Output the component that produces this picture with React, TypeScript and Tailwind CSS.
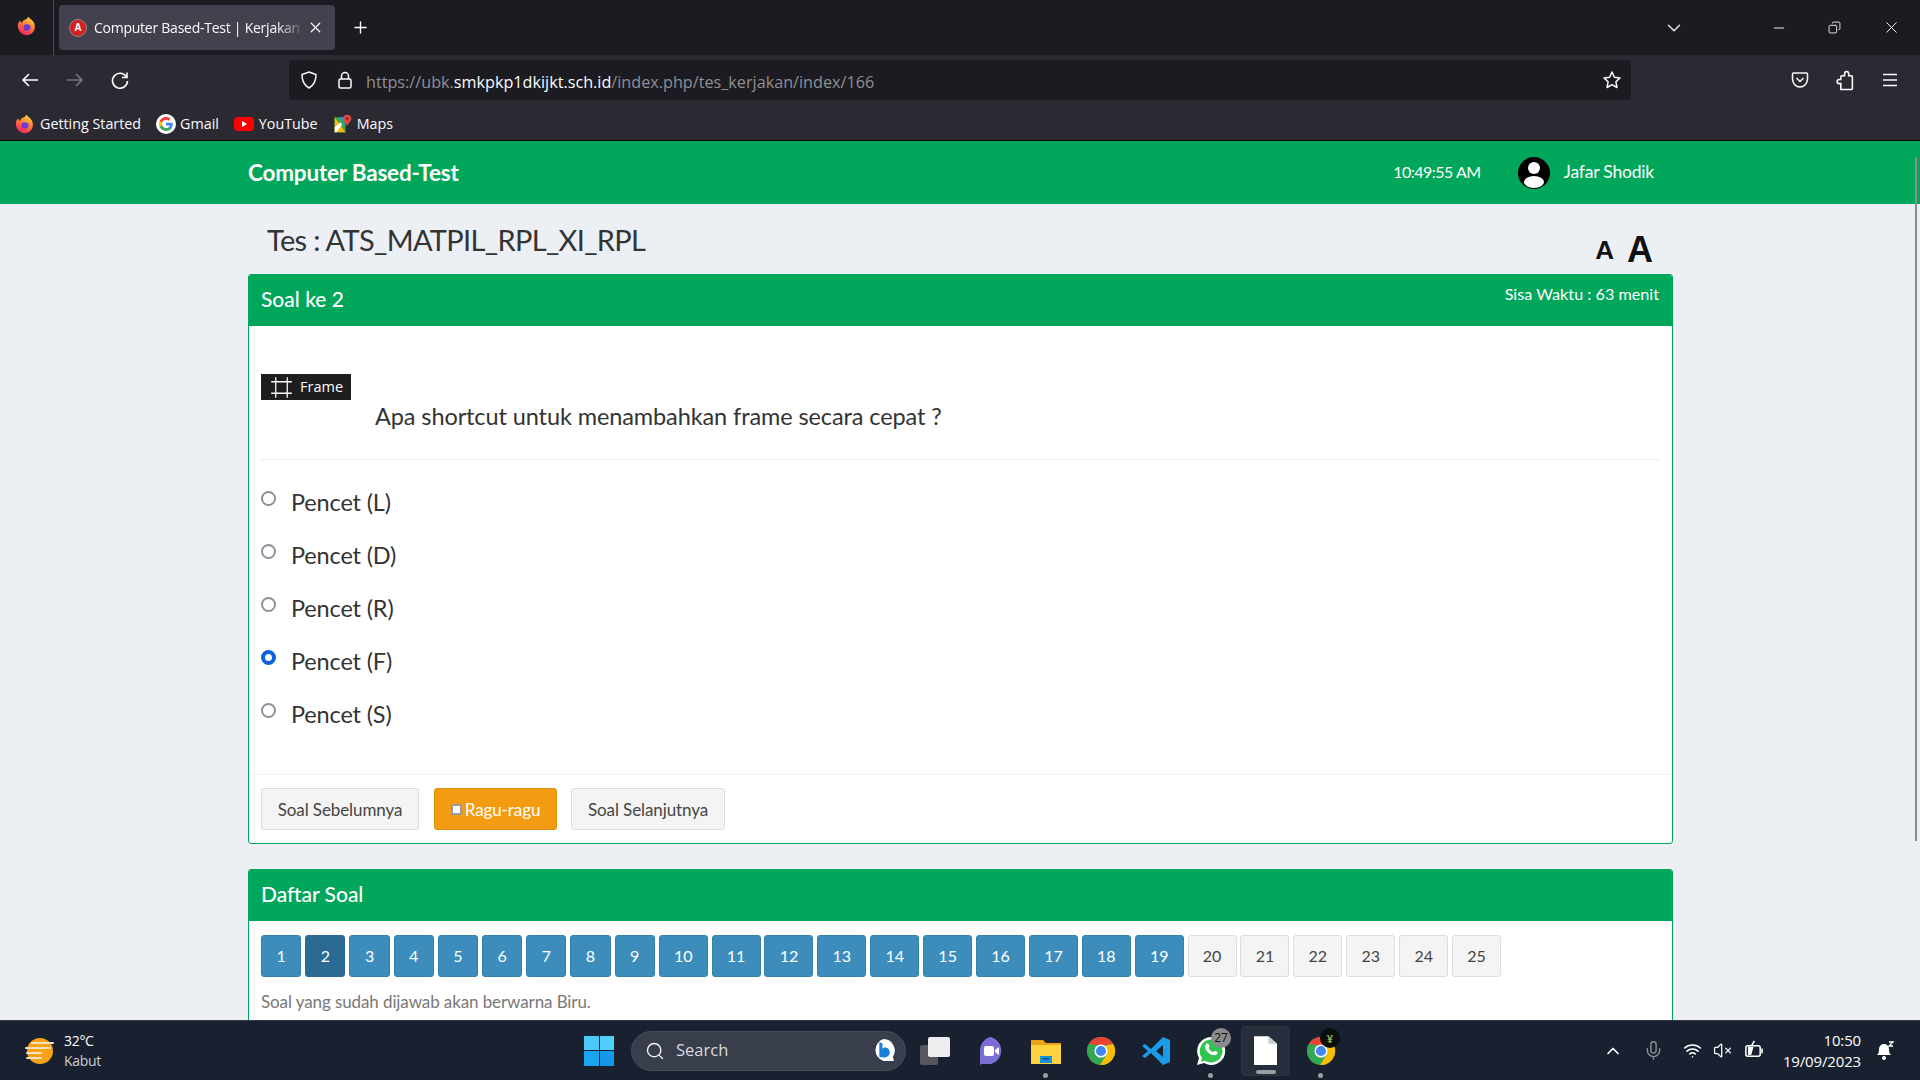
import { ChevronDown, ChevronUp, Copy, Mic, Minus, Plus, Search, VolumeX, Wifi, X } from 'lucide-react';

const SOURCE = { fontFamily: 'Lato, "Noto Sans", sans-serif' };
const UI = { fontFamily: '"Open Sans", "Noto Sans", sans-serif' };

const ANSWERS = ['Pencet (L)', 'Pencet (D)', 'Pencet (R)', 'Pencet (F)', 'Pencet (S)'];
const NUMBERS = Array.from({ length: 25 }, (_, i) => i + 1);

function FirefoxLogo({ id, className }: { id: string; className?: string }) {
  return (
    <svg viewBox="0 0 24 24" className={className}>
      <defs>
        <linearGradient id={id} x1="0.7" y1="0" x2="0.2" y2="1">
          <stop offset="0" stopColor="#ffd43a" />
          <stop offset="0.5" stopColor="#ff7139" />
          <stop offset="1" stopColor="#f5156c" />
        </linearGradient>
      </defs>
      <path d="M14 1c1 3 6 4 7 9 2 7-3 13-9 13S1 18 1 12c0-3 1-5 3-7 0 2 1 3 2 3 1-3 4-4 5-4 1-1 2-2 3-3z" fill={`url(#${id})`} />
      <circle cx="12" cy="13.500" r="4.200" fill="#6e3bd1" />
      <path d="M8 10c3-2 7-2 9 1-3-1-6-1-9-1z" fill="#ffb52e" />
    </svg>
  );
}

function GoogleG({ className }: { className?: string }) {
  return (
    <svg viewBox="0 0 24 24" className={className}>
      <circle cx="12" cy="12" r="12" fill="#fff" />
      <path d="M20 12.2c0-.6-.1-1.200-.2-1.700H12v3.200h4.500c-.2 1-.8 1.900-1.700 2.500v2.100h2.700c1.600-1.500 2.500-3.600 2.500-6.100z" fill="#4285f4" />
      <path d="M12 20.300c2.200 0 4.100-.7 5.500-2l-2.700-2.100c-.7.500-1.700.8-2.800.8-2.200 0-4-1.400-4.700-3.400H4.500v2.100c1.400 2.800 4.300 4.600 7.500 4.600z" fill="#34a853" />
      <path d="M7.300 13.600c-.4-1.100-.4-2.200 0-3.300V8.200H4.500c-1.200 2.300-1.200 5 0 7.500z" fill="#fbbc05" />
      <path d="M12 7c1.200 0 2.300.4 3.200 1.200l2.400-2.400C16.100 4.500 14.200 3.700 12 3.700c-3.200 0-6.100 1.800-7.500 4.500l2.800 2.100C8 8.400 9.800 7 12 7z" fill="#ea4335" />
    </svg>
  );
}

function MapsIcon({ className }: { className?: string }) {
  return (
    <svg viewBox="0 0 24 24" className={className}>
      <path d="M2 4h13v18H2z" fill="#34a853" />
      <path d="M2 4l13 18H2z" fill="#fbbc05" />
      <path d="M8 4h7v9z" fill="#4285f4" />
      <path d="M2 16l7-6 2 3-7 9H2z" fill="#fff" />
      <path d="M17 1c-3 0-5 2-5 4.500 0 3 3 5 5 9 2-4 5-6 5-9C22 3 20 1 17 1z" fill="#dd4b3e" />
      <circle cx="17" cy="5.500" r="1.800" fill="#8c2a22" />
    </svg>
  );
}

function ChromeLogo({ className }: { className?: string }) {
  return (
    <svg viewBox="0 0 32 32" className={className}>
      <circle cx="16" cy="16" r="15" fill="#34a853" />
      <path d="M3 8.500A15 15 0 0 1 29 8.500L16 10z" fill="#ea4335" />
      <path d="M3 8.500L10 20l3 8-2 1.200A15 15 0 0 1 3 8.500z" fill="#34a853" />
      <path d="M29 8.500A15 15 0 0 1 15 31l7-11-1-10z" fill="#fbbc05" />
      <circle cx="16" cy="16" r="7" fill="#fff" />
      <circle cx="16" cy="16" r="5.400" fill="#4285f4" />
    </svg>
  );
}

function BrowserChrome() {
  return (
    <div className="shrink-0 text-[#fbfbfe]" style={UI}>
      <div className="flex h-[55px] items-center bg-[#1c1b22]">
        <div className="flex h-full w-[54px] items-center justify-center border-r border-[#4a4a52]">
          <FirefoxLogo id="ff-top" className="mb-1 h-[20px] w-[20px]" />
        </div>
        <div className="ml-[5px] flex h-[45px] w-[276px] items-center rounded-[4px] bg-[#42414d] pl-[10px] pr-[11px]">
          <span className="flex h-[18px] w-[18px] shrink-0 items-center justify-center rounded-full border border-[#888] bg-[#d81e1e] text-[10px] font-bold text-white">A</span>
          <span className="ml-[7px] w-[212px] whitespace-nowrap text-[14px] tracking-[-0.25px] [mask-image:linear-gradient(to_right,black_86%,transparent)]">Computer Based-Test | Kerjakan</span>
          <X className="ml-auto h-[17px] w-[17px]" strokeWidth={1.7} />
        </div>
        <Plus className="ml-[16px] h-[19px] w-[19px]" strokeWidth={1.7} />
        <ChevronDown className="ml-auto mr-[84px] h-[22px] w-[22px] text-[#e4e4e7]" strokeWidth={1.6} />
        <div className="mr-[19px] flex w-[132px] items-center justify-between pl-[2px]">
          <Minus className="h-[16px] w-[16px]" strokeWidth={1.4} />
          <Copy className="h-[13px] w-[13px] -scale-x-100" strokeWidth={1.6} />
          <X className="h-[19px] w-[19px]" strokeWidth={1.2} />
        </div>
      </div>
      <div className="flex h-[50px] items-center bg-[#2b2a33]">
        <div className="flex w-[289px] items-center pl-[20px]">
          <svg viewBox="0 0 20 20" className="h-[20px] w-[20px]" fill="none" stroke="#fbfbfe" strokeWidth="1.6"><path d="M18 10H3M9 4l-6 6 6 6" /></svg>
          <svg viewBox="0 0 20 20" className="ml-[25px] h-[20px] w-[20px]" fill="none" stroke="#76757c" strokeWidth="1.6"><path d="M2 10h15M11 4l6 6-6 6" /></svg>
          <svg viewBox="0 0 20 20" className="ml-[25px] h-[20px] w-[20px]" fill="none" stroke="#fbfbfe" strokeWidth="1.6"><path d="M16.500 7A7.500 7.500 0 1 0 17.500 11M17 2.500V7.500H12" /></svg>
        </div>
        <div className="flex h-[40px] w-[1342px] items-center rounded-[4px] bg-[#1c1b22] pl-[10px] pr-[9px]">
          <svg viewBox="0 0 20 20" className="h-[20px] w-[20px]" fill="none" stroke="#fbfbfe" strokeWidth="1.500"><path d="M10 2l7 2.500c0 6-1.500 10.500-7 13.500C4.500 15 3 10.500 3 4.500z" /></svg>
          <svg viewBox="0 0 20 20" className="ml-[16px] h-[20px] w-[20px]" fill="none" stroke="#fbfbfe" strokeWidth="1.500"><rect x="4" y="9" width="12" height="9" rx="1.500" /><path d="M6.500 9V6a3.500 3.500 0 0 1 7 0v3" /></svg>
          <span className="ml-[11px] mt-[4px] text-[16.200px] text-[#8f8f94]">https://ubk.<span className="text-[#fbfbfe]">smkpkp1dkijkt.sch.id</span>/index.php/tes_kerjakan/index/166</span>
          <svg viewBox="0 0 20 20" className="ml-auto h-[20px] w-[20px]" fill="none" stroke="#fbfbfe" strokeWidth="1.500"><path d="M10 2l2.400 5.200 5.600.7-4.100 3.900 1.100 5.700L10 14.700l-5 2.800 1.100-5.700L2 7.900l5.600-.7z" strokeLinejoin="round" /></svg>
        </div>
        <div className="ml-auto flex w-[130px] items-center">
          <svg viewBox="0 0 20 20" className="h-[20px] w-[20px]" fill="none" stroke="#fbfbfe" strokeWidth="1.500"><path d="M3.500 3h13c.6 0 1 .4 1 1v5c0 4.500-3.500 8-7.500 8s-7.500-3.500-7.500-8V4c0-.6.4-1 1-1z" /><path d="M6.500 8l3.500 3.500L13.500 8" /></svg>
          <svg viewBox="0 0 20 20" className="ml-[24px] h-[21px] w-[21px]" fill="none" stroke="#fbfbfe" strokeWidth="1.500"><path d="M12 1.500c-1.500 0-2 1-2 2.500v1.500H7.500c-.8 0-1 .5-1 1V9H5c-1.500 0-2 1-2 2s.5 2 2 2h1.500v5.500h10c.5 0 1-.3 1-1V6.500c0-.5-.3-1-1-1H14V4c0-1.500-.5-2.500-2-2.500z" /></svg>
          <svg viewBox="0 0 20 20" className="ml-[25px] h-[20px] w-[20px]" fill="none" stroke="#fbfbfe" strokeWidth="1.500"><path d="M3 4.500h14M3 10h14M3 15.500h14" /></svg>
        </div>
      </div>
      <div className="flex h-[36px] items-center border-b border-[#0c0c0d] bg-[#2b2a33] pl-[15px] pt-[2px] text-[14.300px]">
        <FirefoxLogo id="ff-book" className="h-[20px] w-[20px]" />
        <span className="ml-[5px]">Getting Started</span>
        <GoogleG className="ml-[15px] h-[20px] w-[20px]" />
        <span className="ml-[4px]">Gmail</span>
        <svg viewBox="0 0 20 20" className="ml-[15px] h-[20px] w-[20px]"><rect y="3" width="20" height="14" rx="4" fill="#f00" /><path d="M8 7l5 3-5 3z" fill="#fff" /></svg>
        <span className="ml-[5px]">YouTube</span>
        <MapsIcon className="ml-[15px] h-[20px] w-[20px]" />
        <span className="ml-[4px]">Maps</span>
      </div>
    </div>
  );
}

function Taskbar() {
  return (
    <div className="relative flex h-[60px] shrink-0 items-center border-t border-[#333a46] bg-[#192130] text-white" style={UI}>
      <svg viewBox="0 0 32 32" className="ml-[24px] h-[32px] w-[32px]">
        <ellipse cx="16" cy="16" rx="13" ry="13" fill="#f7a113" />
        <path d="M8 8h21M2 13h24M3 18h14M3 23h14" stroke="#efe3c4" strokeWidth="2" strokeLinecap="round" />
      </svg>
      <div className="ml-[8px] text-[14px] leading-[20px] tracking-[-0.3px]">
        <div>32°C</div>
        <div className="text-[#c9ccd1]">Kabut</div>
      </div>
      <div className="ml-[483px] grid h-[30px] w-[30px] grid-cols-2 gap-[1px]">
        <div className="bg-[#4cc8f8]" />
        <div className="bg-[#4fd0fb]" />
        <div className="bg-[#1ba4ef]" />
        <div className="bg-[#1597ec]" />
      </div>
      <div className="ml-[17px] flex h-[40px] w-[275px] items-center rounded-full border border-[#454b57] bg-[#383e4b] pl-[13px] pr-[9px]">
        <Search className="h-[20px] w-[20px]" strokeWidth={1.6} />
        <span className="ml-[11px] text-[16.500px] text-[#d8dade]">Search</span>
        <svg viewBox="0 0 24 24" className="ml-auto h-[25px] w-[25px]"><path d="M12 1a11 11 0 0 1 9 17l1 4H12A11 11 0 0 1 12 1z" fill="#fff" /><path d="M8 4l3 1v5c3-2 7 0 7 4 0 4-5 6-10 4z" fill="#1b7fd8" /></svg>
      </div>
      <div className="ml-[13.500px] flex h-full w-[30px] items-center">
        <div className="relative h-[28px] w-[30px]">
          <div className="absolute bottom-0 left-0 h-[20px] w-[18px] rounded-[2px] bg-[#55575c]" />
          <div className="absolute right-0 top-0 h-[20px] w-[22px] rounded-[2px] bg-[#eceef0]" />
        </div>
      </div>
      <div className="ml-[13.500px] flex h-full items-center">
        <div className="flex h-full w-[55px] items-center justify-center">
          <svg viewBox="0 0 30 30" className="h-[30px] w-[30px]"><path d="M15 1a14 14 0 0 1 0 27H5l-1 2V15A13 14 0 0 1 15 1z" fill="#7b6fd6" /><rect x="8" y="10" width="10" height="10" rx="2" fill="#fff" /><path d="M19 14l4-3v8l-4-3z" fill="#fff" /></svg>
        </div>
        <div className="relative flex h-full w-[55px] items-center justify-center">
          <svg viewBox="0 0 30 30" className="h-[30px] w-[30px]"><path d="M0 4h12l3 3h15v4H0z" fill="#e8a317" /><path d="M0 9h30v19H0z" fill="#ffd23f" /><rect x="9" y="20" width="12" height="7" fill="#1592d8" /><rect x="12" y="22" width="6" height="1.500" fill="#0c4d7c" /></svg>
          <span className="absolute bottom-[2px] h-[5px] w-[5px] rounded-full bg-[#9a9da3]" />
        </div>
        <div className="flex h-full w-[55px] items-center justify-center">
          <ChromeLogo className="h-[30px] w-[30px]" />
        </div>
        <div className="flex h-full w-[55px] items-center justify-center">
          <svg viewBox="0 0 30 30" className="h-[30px] w-[30px]"><path d="M22 1l7 3v22l-7 3L10 17l-6 5-3-2 6-5-6-5 3-2 6 5z" fill="#1a9ce8" /><path d="M22 9l-7 6 7 6z" fill="#192130" /></svg>
        </div>
        <div className="relative flex h-full w-[55px] items-center justify-center">
          <svg viewBox="0 0 30 30" className="h-[30px] w-[30px]"><path d="M15 1a14 14 0 1 1-7 26l-7 2 2-7A14 14 0 0 1 15 1z" fill="#fff" /><path d="M15 3.500a11.500 11.500 0 1 1-6 21.300l-4 1 1-4A11.500 11.500 0 0 1 15 3.500z" fill="#31c550" /><path d="M10 8c1-1 2-1 2.500 0l1 2.500-1 1.500c1 2 2.500 3.300 4.500 4.200l1.500-1.500 3 1.300c.5 1-.5 3-2.500 3.300-5 .5-10-5-10-8.500 0-1 .5-1.800 1-2.300z" fill="#fff" /></svg>
          <span className="absolute left-[28px] top-[7px] flex h-[20px] w-[20px] items-center justify-center rounded-full bg-[#8b8b8b] text-[12px] text-[#111]">27</span>
          <span className="absolute bottom-[2px] h-[5px] w-[5px] rounded-full bg-[#9a9da3]" />
        </div>
        <div className="relative flex h-[50px] w-[55px] items-center justify-center">
          <div className="flex h-[50px] w-[49px] items-center justify-center rounded-[4px] border border-[#2d3442] bg-[#262d3b]">
            <svg viewBox="0 0 24 30" className="h-[29px] w-[23px]"><path d="M0 0h15l9 8v22H0z" fill="#fff" /><path d="M15 0l9 8h-9z" fill="#c9ccd1" /></svg>
          </div>
          <span className="absolute bottom-[2px] h-[4px] w-[20px] rounded-full bg-[#9a9da3]" />
        </div>
        <div className="relative flex h-full w-[55px] items-center justify-center">
          <ChromeLogo className="h-[30px] w-[30px]" />
          <span className="absolute left-[27px] top-[7px] flex h-[20px] w-[20px] items-center justify-center rounded-full bg-[#0b0f0b] text-[11px] font-bold leading-none text-[#8fae5a]">¥</span>
          <span className="absolute bottom-[2px] h-[5px] w-[5px] rounded-full bg-[#9a9da3]" />
        </div>
      </div>
      <ChevronUp className="ml-[254.500px] h-[20px] w-[20px] shrink-0" strokeWidth={2} />
      <Mic className="ml-[20px] h-[21px] w-[21px] shrink-0 text-[#8d9097]" strokeWidth={1.6} />
      <Wifi className="ml-[19px] h-[19px] w-[19px] shrink-0" strokeWidth={2} />
      <VolumeX className="ml-[11px] h-[19px] w-[19px] shrink-0" strokeWidth={1.6} />
      <svg viewBox="0 0 22 22" className="ml-[11px] h-[21px] w-[21px] shrink-0" fill="none" stroke="#fff" strokeWidth="1.600"><rect x="3" y="6" width="15" height="11" rx="2" /><path d="M20 9v5" /><path d="M6 8h4l-2 7H6z" fill="#fff" /><path d="M12 1L9 6" /></svg>
      <div className="ml-auto mr-[59px] text-right text-[15px] leading-[21px] tracking-[-0.15px]">
        <div>10:50</div>
        <div>19/09/2023</div>
      </div>
      <svg viewBox="0 0 20 20" className="absolute left-[1875px] top-[20px] h-[20px] w-[20px]"><path d="M9 3a5 5 0 0 0-5 5c0 4-1 5-2 6h14c-1-1-2-2-2-6a5 5 0 0 0-5-5z" fill="#fff" /><circle cx="9" cy="17" r="2" fill="#fff" /><path d="M14 1h4l-4 4h4" fill="none" stroke="#fff" strokeWidth="1.300" /></svg>
    </div>
  );
}

function CardHeader({ title, right }: { title: string; right?: string }) {
  return (
    <div className="flex h-[51px] items-start justify-between bg-[#00a65a] pl-[12px] pr-[13px] text-white">
      <h3 className="mt-[11px] text-[21px] font-medium leading-[26px]">{title}</h3>
      {right && <span className="mt-[7px] text-[16.200px] leading-[24px]">{right}</span>}
    </div>
  );
}

function QuestionCard() {
  return (
    <div className="overflow-hidden rounded-[3px] border border-[#00a65a] bg-white">
      <CardHeader title="Soal ke 2" right="Sisa Waktu : 63 menit" />
      <div className="pl-[12px] pr-[13px] pt-[48px]">
        <div className="flex h-[26px] w-[90px] items-center bg-[#1e1e1e] pl-[9px] text-white" style={UI}>
          <svg viewBox="0 0 20 20" className="h-[23px] w-[23px]" fill="none" stroke="#fff" strokeWidth="1.100"><path d="M5 1v18M15 1v18M1 5h18M1 15h18" /></svg>
          <span className="ml-[7px] text-[14.500px] leading-none">Frame</span>
        </div>
        <p className="ml-[114px] text-[23.500px] leading-[32px] tracking-[-0.1px] text-[#333]">Apa shortcut untuk menambahkan frame secara cepat ?</p>
        <div className="mt-[27px] h-px bg-[#eeeeee]" />
        <div className="mt-[20px] flex flex-col">
          {ANSWERS.map((answer, i) => (
            <label key={answer} className="flex h-[53.100px] items-start">
              {i === 3 ? (
                <span className="mt-[11px] h-[15px] w-[15px] rounded-full border-[4px] border-[#0a63dd] bg-white" />
              ) : (
                <span className="mt-[11px] h-[15px] w-[15px] rounded-full border-2 border-[#8f8f9d] bg-white" />
              )}
              <span className="ml-[15px] mt-[4.500px] text-[23.500px] leading-[34px] tracking-[-0.15px] text-[#333]">{answer}</span>
            </label>
          ))}
        </div>
      </div>
      <div className="mt-[29px] flex h-[69px] gap-[15px] border-t border-[#f4f4f4] px-[12px] pt-[13px] text-[17px] tracking-[-0.1px]">
        <button className="h-[42px] w-[158px] rounded-[3px] border border-[#ddd] bg-[#f4f4f4] text-[#444]">Soal Sebelumnya</button>
        <button className="flex h-[42px] w-[123px] items-center justify-center rounded-[3px] border border-[#e08e0b] bg-[#f39c12] text-white">
          <span className="mr-[3px] h-[11px] w-[11px] border-2 border-[#9a9aa5] bg-white" />
          Ragu-ragu
        </button>
        <button className="-ml-[1px] h-[42px] w-[154px] rounded-[3px] border border-[#ddd] bg-[#f4f4f4] text-[#444]">Soal Selanjutnya</button>
      </div>
    </div>
  );
}

function ListCard() {
  return (
    <div className="mt-[25px] overflow-hidden rounded-t-[3px] border border-[#00a65a] bg-white">
      <CardHeader title="Daftar Soal" />
      <div className="px-[12px] pb-[40px] pt-[14px]">
        <div className="flex gap-[3.900px]">
          {NUMBERS.map((n) => (
            <div
              key={n}
              className={`flex h-[42px] items-center justify-center rounded-[3px] border text-[16px] ${n < 10 ? 'w-[40.300px]' : 'w-[49px]'} ${
                n === 2
                  ? 'border-[#2a6a93] bg-[#2a6a93] text-white'
                  : n <= 19
                    ? 'border-[#367fa9] bg-[#3c8dbc] text-white'
                    : 'border-[#ddd] bg-[#f4f4f4] text-[#444]'
              }`}
            >
              {n}
            </div>
          ))}
        </div>
        <p className="mt-[13px] text-[17px] leading-[24px] tracking-[-0.1px] text-[#777]">Soal yang sudah dijawab akan berwarna Biru.</p>
      </div>
    </div>
  );
}

export default function App() {
  return (
    <div className="flex h-screen w-screen flex-col overflow-hidden bg-[#ecf0f5]" style={SOURCE}>
      <BrowserChrome />
      <div className="relative min-h-0 flex-1 overflow-hidden">
        <header className="flex h-[63px] items-center bg-[#00a65a] pl-[248px] pr-[266px] text-white">
          <span className="text-[22.500px] font-bold tracking-[-0.2px]">Computer Based-Test</span>
          <span className="-mt-[1px] ml-auto text-[16px] tracking-[-0.5px]">10:49:55 AM</span>
          <span className="ml-[37px] flex h-[32px] w-[32px] items-center justify-center overflow-hidden rounded-full bg-black">
            <svg viewBox="0 0 32 32" className="h-[32px] w-[32px]"><circle cx="16" cy="11" r="6" fill="#fff" /><ellipse cx="16" cy="25" rx="10" ry="6" fill="#fff" /></svg>
          </span>
          <span className="ml-[14px] text-[17.500px] tracking-[-0.2px]">Jafar Shodik</span>
        </header>
        <div className="ml-[248px] w-[1425px]">
          <div className="flex h-[70px] items-start justify-between">
            <h1 className="ml-[19px] mt-[18px] text-[29px] leading-[36px] tracking-[-0.66px] text-[#333]">Tes : ATS_MATPIL_RPL_XI_RPL</h1>
            <div className="mr-[20px] mt-[28px] flex items-center gap-[13px] font-bold text-[#111]" style={{ fontFamily: '"Liberation Sans", sans-serif' }}>
              <span className="text-[26px] leading-[36px]">A</span>
              <span className="text-[36px] leading-[36px]">A</span>
            </div>
          </div>
          <QuestionCard />
          <ListCard />
        </div>
        <div className="absolute right-[3px] top-[16px] h-[684px] w-[2px] bg-[#8c8c8c]" />
      </div>
      <Taskbar />
    </div>
  );
}
